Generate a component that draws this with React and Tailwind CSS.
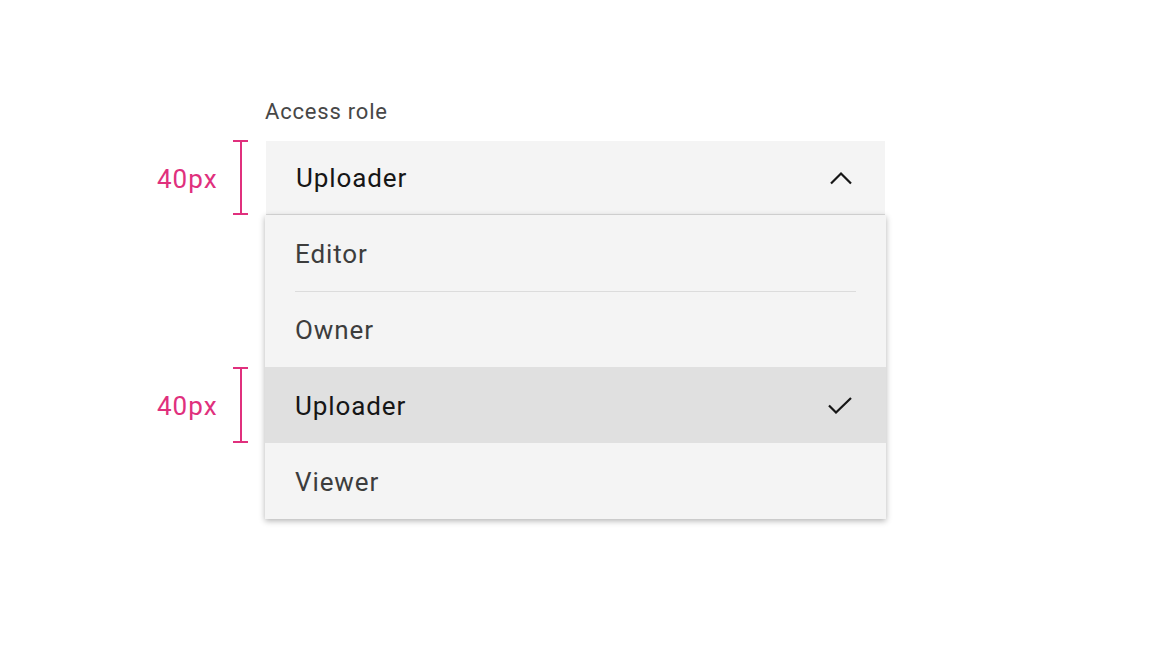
import React from "react";

function Annot({ h }) {
  return (
    <div className={`flex items-center ${h}`}>
      <span className="w-[60px] pt-[2px] text-[26px] leading-none tracking-[1px] text-[#e0307d]">40px</span>
      <div className="ml-[16px] flex h-full w-[15px] flex-col items-center">
        <div className="h-[2px] w-[15px] bg-[#e0307d]" />
        <div className="w-[2px] flex-1 bg-[#e0307d]" />
        <div className="h-[2px] w-[15px] bg-[#e0307d]" />
      </div>
    </div>
  );
}

export default function App() {
  return (
    <div
      className="flex h-[648px] w-[1152px] bg-white"
      style={{ fontFamily: 'Roboto, "Noto Sans", sans-serif' }}
    >
      <div className="flex flex-col pl-[157px] pt-[140px]">
        <Annot h="h-[75px]" />
        <div className="h-[152px]" />
        <Annot h="h-[76px]" />
      </div>
      <div className="ml-[17px] flex w-[621px] flex-col pt-[98px]">
        <div className="h-[43px] text-[22px] leading-[28px] tracking-[0.8px] text-[#474747]">Access role</div>
        <div className="ml-[1px] flex h-[74px] w-[619px] items-center justify-between border-b border-[#dcdcdc] bg-[#f4f4f4] pl-[30px] pr-[33px]">
          <span className="pt-[2px] text-[26px] tracking-[0.9px] text-[#161616]">Uploader</span>
          <svg width="22" height="14" viewBox="0 0 22 14" fill="none">
            <path d="M1 12.5 L11 2.5 L21 12.5" stroke="#161616" strokeWidth="2.2" />
          </svg>
        </div>
        <div className="flex w-[621px] flex-col bg-[#f4f4f4] text-[26px] tracking-[0.9px] shadow-[0_2px_6px_rgba(0,0,0,0.3)]">
          <div className="px-[30px]">
            <div className="flex h-[77px] items-center border-b border-[#dcdcdc] pt-[2px] text-[#3d3d3d]">Editor</div>
          </div>
          <div className="flex h-[75px] items-center px-[30px] pt-[2px] text-[#3d3d3d]">Owner</div>
          <div className="flex h-[76px] items-center justify-between bg-[#e0e0e0] pl-[30px] pr-[34px] text-[#161616]">
            <span className="pt-[2px]">Uploader</span>
            <svg width="24" height="17" viewBox="0 0 24 17" fill="none">
              <path d="M1 8.5 L8 15.5 L23 1" stroke="#161616" strokeWidth="2.2" />
            </svg>
          </div>
          <div className="flex h-[76px] items-center px-[30px] pt-[2px] text-[#3d3d3d]">Viewer</div>
        </div>
      </div>
    </div>
  );
}
